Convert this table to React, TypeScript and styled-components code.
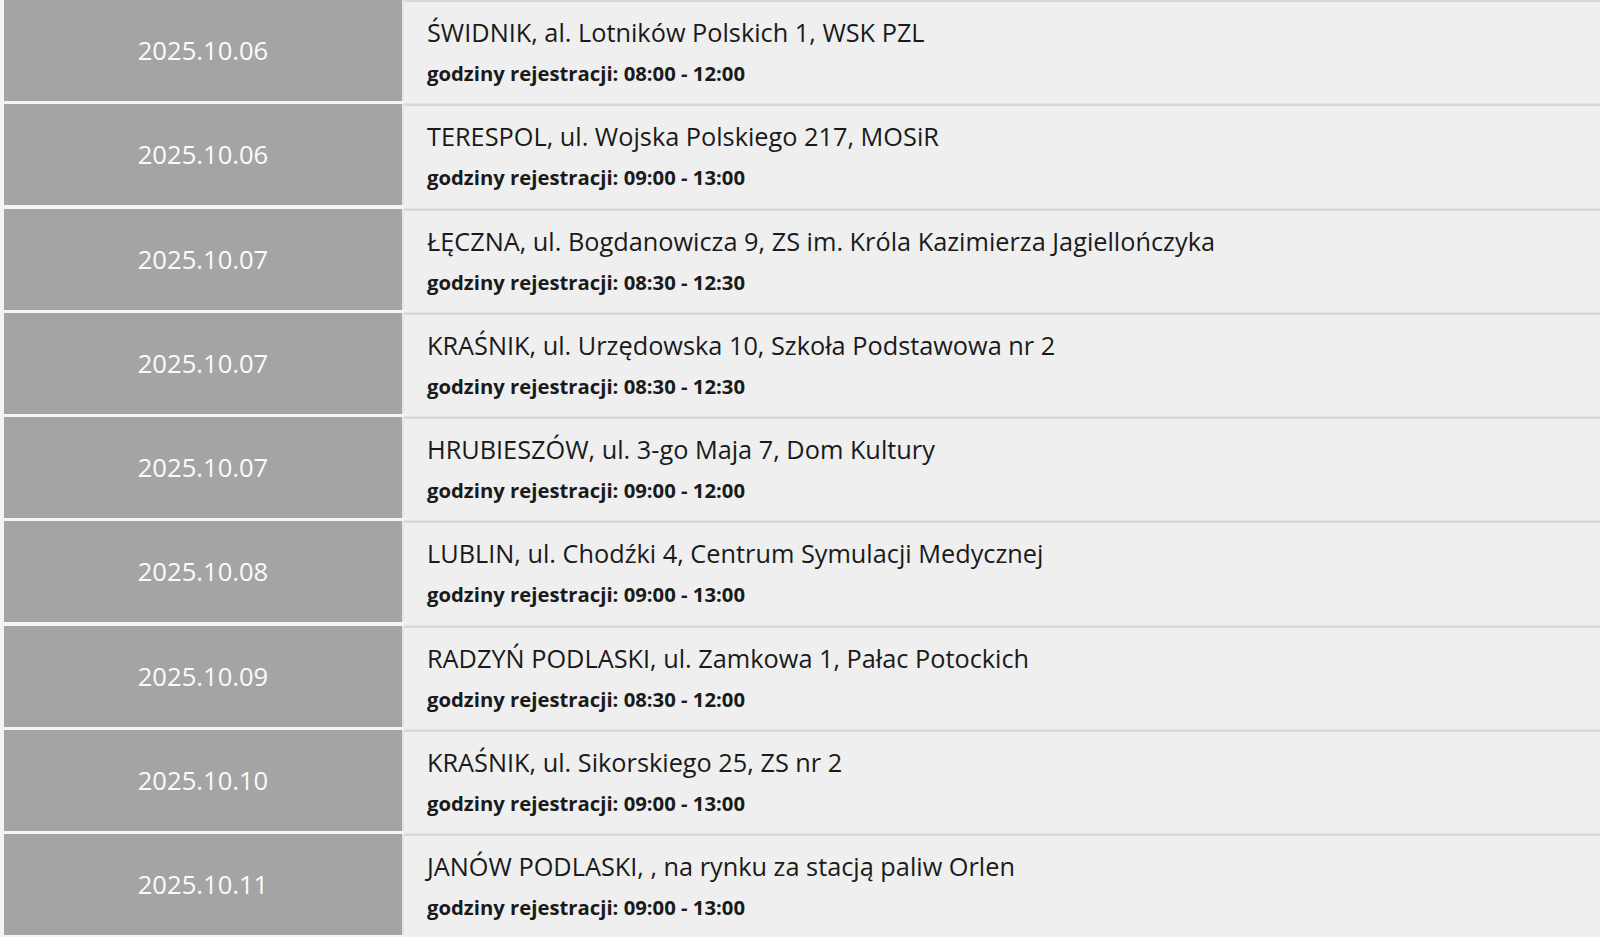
import React from "react";
import styled, { createGlobalStyle } from "styled-components";

const Global = createGlobalStyle`
  html, body { margin: 0; padding: 0; background: #f4f4f4; }
  body { font-family: "Open Sans", "Noto Sans", sans-serif; }
`;

const List = styled.div`
  display: flex;
  flex-direction: column;
  width: 1600px;
`;

const Row = styled.div`
  display: grid;
  grid-template-columns: 400px 1fr;
  height: 104.25px;
  padding-left: 4px;
  box-sizing: border-box;
`;

const DateCell = styled.div`
  background: #a4a4a4;
  color: #fbfbfb;
  font-size: 25.6px;
  display: flex;
  align-items: center;
  justify-content: center;
  height: 101px;
  border-right: 2px solid #e4e4e4;
  box-sizing: border-box;
`;

const InfoCell = styled.div`
  background: #efefef;
  border-top: 2px solid #d8d8d8;
  border-bottom: 1px solid #e2e2e2;
  padding: 11px 20px 0 23px;
  color: #1a1a1a;
  box-sizing: border-box;
`;

const Place = styled.div`
  font-size: 25.3px;
  line-height: 38px;
`;

const Hours = styled.div`
  font-size: 20.3px;
  font-weight: 700;
  line-height: 28px;
  margin-top: 8px;
`;

const rows = [
  ["2025.10.06", "ŚWIDNIK, al. Lotników Polskich 1, WSK PZL", "08:00 - 12:00"],
  ["2025.10.06", "TERESPOL, ul. Wojska Polskiego 217, MOSiR", "09:00 - 13:00"],
  ["2025.10.07", "ŁĘCZNA, ul. Bogdanowicza 9, ZS im. Króla Kazimierza Jagiellończyka", "08:30 - 12:30"],
  ["2025.10.07", "KRAŚNIK, ul. Urzędowska 10, Szkoła Podstawowa nr 2", "08:30 - 12:30"],
  ["2025.10.07", "HRUBIESZÓW, ul. 3-go Maja 7, Dom Kultury", "09:00 - 12:00"],
  ["2025.10.08", "LUBLIN, ul. Chodźki 4, Centrum Symulacji Medycznej", "09:00 - 13:00"],
  ["2025.10.09", "RADZYŃ PODLASKI, ul. Zamkowa 1, Pałac Potockich", "08:30 - 12:00"],
  ["2025.10.10", "KRAŚNIK, ul. Sikorskiego 25, ZS nr 2", "09:00 - 13:00"],
  ["2025.10.11", "JANÓW PODLASKI, , na rynku za stacją paliw Orlen", "09:00 - 13:00"],
];

export default function App() {
  return (
    <>
      <Global />
      <List>
        {rows.map(([d, p, h], i) => (
          <Row key={i}>
            <DateCell>{d}</DateCell>
            <InfoCell>
              <Place>{p}</Place>
              <Hours>godziny rejestracji: {h}</Hours>
            </InfoCell>
          </Row>
        ))}
      </List>
    </>
  );
}
